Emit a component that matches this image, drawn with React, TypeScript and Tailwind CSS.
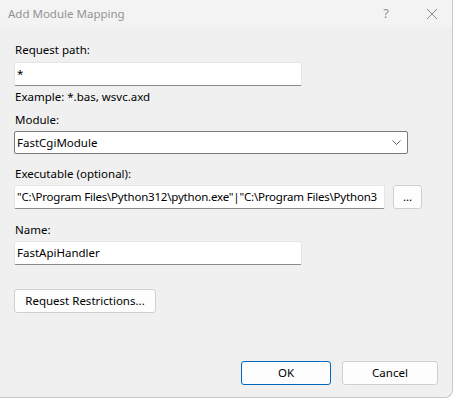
import React from 'react';

const font = { fontFamily: '"Segoe UI", "Noto Sans", "Liberation Sans", sans-serif' };

function TextBox({ value, width, extra = '' }: { value: string; width: string; extra?: string }) {
    return (
        <div
            className={`${width} h-[24px] bg-white border border-[#e5e5e5] border-b-[#8a8a8a] rounded-[2px] flex items-center px-[2px] overflow-hidden whitespace-nowrap text-[11.5px] text-black ${extra}`}
        >
            {value}
        </div>
    );
}

function Button({ label, className }: { label: string; className: string }) {
    return (
        <button
            className={`h-[24px] bg-[#fdfdfd] border border-[#d0d0d0] rounded-[3px] text-[11.5px] text-black flex items-center justify-center ${className}`}
        >
            {label}
        </button>
    );
}

export default function App() {
    return (
        <div className="w-[454px] h-[399px] bg-white" style={font}>
            <div className="w-[453px] h-[398px] bg-[#f0f0f0] border-r border-b border-[#c8c8c8] rounded-br-[8px] flex flex-col overflow-hidden">
                {/* title bar */}
                <div className="h-[28px] bg-[#f3f3f3] flex items-center pl-[8px] text-[11.5px] text-[#939393]">
                    <span className="flex-1">Add Module Mapping</span>
                    <span className="w-[12px] text-center text-[13px]">?</span>
                    <svg className="ml-[34px] mr-[14px]" width="12" height="12" viewBox="0 0 12 12">
                        <path d="M1 1 L11 11 M11 1 L1 11" stroke="#8c8c8c" strokeWidth="1" />
                    </svg>
                </div>

                {/* body */}
                <div className="flex-1 flex flex-col pl-[14px] pt-[14px] text-[11.5px] text-black leading-[16px]">
                    <div className="pl-[1px]">Request path:</div>
                    <div className="mt-[4px]">
                        <TextBox value="*" width="w-[288px]" />
                    </div>
                    <div className="pl-[1px] mt-[3px]">Example: *.bas, wsvc.axd</div>

                    <div className="pl-[1px] mt-[7px]">Module:</div>
                    <div className="mt-[3px] w-[394px] h-[23px] bg-white border border-[#7a7a7a] rounded-[2px] flex items-center pl-[2px] pr-[6px]">
                        <span className="flex-1">FastCgiModule</span>
                        <svg width="9" height="6" viewBox="0 0 9 6">
                            <path d="M0.5 0.5 L4.5 4.5 L8.5 0.5" stroke="#606060" strokeWidth="1" fill="none" />
                        </svg>
                    </div>

                    <div className="pl-[1px] mt-[12px]">Executable (optional):</div>
                    <div className="mt-[2px] flex items-center gap-[8px]">
                        <TextBox
                            value={'"C:\\Program Files\\Python312\\python.exe"|"C:\\Program Files\\Python3'}
                            width="w-[371px]"
                            extra="tracking-[-0.2px]"
                        />
                        <Button label="..." className="w-[29px] mt-[1px]" />
                    </div>

                    <div className="pl-[1px] mt-[13px]">Name:</div>
                    <div className="mt-[3px]">
                        <TextBox value="FastApiHandler" width="w-[288px]" />
                    </div>

                    <div className="mt-[24px]">
                        <Button label="Request Restrictions..." className="w-[142px]" />
                    </div>

                    <div className="mt-[48px] flex justify-end gap-[11px] pr-[14px]">
                        <button className="w-[90px] h-[24px] bg-[#fdfdfd] border border-[#0067c0] rounded-[3px] text-[11.5px] text-black flex items-center justify-center">
                            OK
                        </button>
                        <Button label="Cancel" className="w-[96px]" />
                    </div>
                </div>
            </div>
        </div>
    );
}
